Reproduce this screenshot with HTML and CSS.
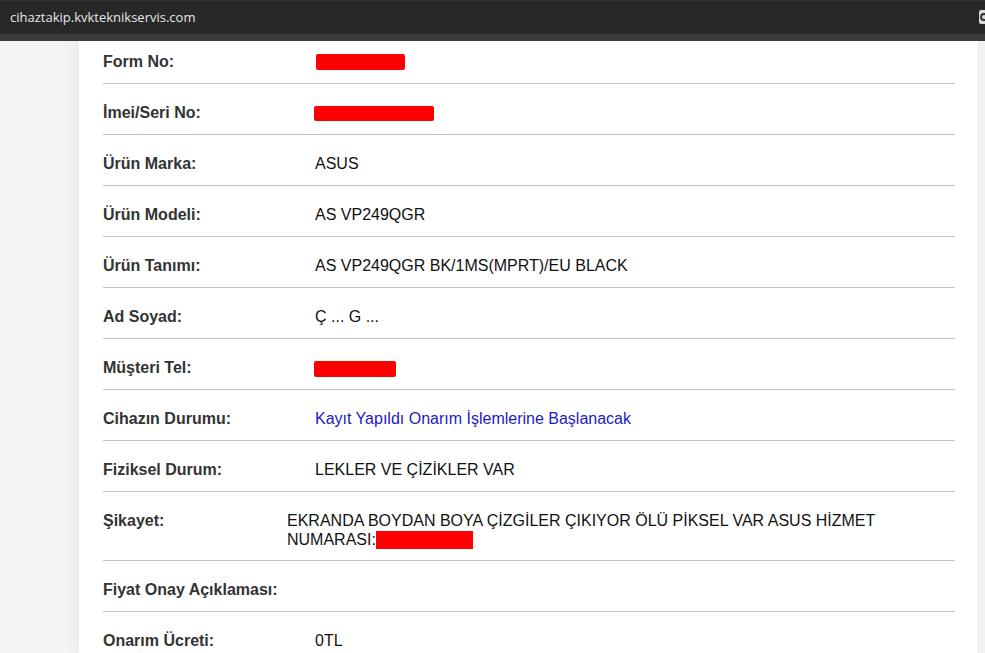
FILE: index.html
```html
<!DOCTYPE html>
<html lang="tr">
<head>
<meta charset="UTF-8" />
<meta name="viewport" content="width=device-width, initial-scale=1" />
<title>Cihaz Takip</title>
<link rel="stylesheet" href="styles.css">
</head>
<body>

<!-- browser bar -->
<div class="topbar">
  <div class="address">cihaztakip.kvkteknikservis.com</div>
  <div class="ext-btn"><span class="ring"></span></div>
</div>
<div class="infobar"></div>

<div class="page">
  <div class="card">
    <div class="row">
      <div class="label">Form No:</div>
      <div class="value"><span class="redact" style="width:89px;margin-left:1px"></span></div>
    </div>
    <div class="row">
      <div class="label">İmei/Seri No:</div>
      <div class="value"><span class="redact redact-low" style="width:120px;margin-left:-1px"></span></div>
    </div>
    <div class="row">
      <div class="label">Ürün Marka:</div>
      <div class="value">ASUS</div>
    </div>
    <div class="row">
      <div class="label">Ürün Modeli:</div>
      <div class="value">AS VP249QGR</div>
    </div>
    <div class="row">
      <div class="label">Ürün Tanımı:</div>
      <div class="value">AS VP249QGR BK/1MS(MPRT)/EU BLACK</div>
    </div>
    <div class="row">
      <div class="label">Ad Soyad:</div>
      <div class="value">Ç ... G ...</div>
    </div>
    <div class="row">
      <div class="label">Müşteri Tel:</div>
      <div class="value"><span class="redact redact-tel" style="width:82px;margin-left:-1px"></span></div>
    </div>
    <div class="row">
      <div class="label">Cihazın Durumu:</div>
      <div class="value status">Kayıt Yapıldı Onarım İşlemlerine Başlanacak</div>
    </div>
    <div class="row">
      <div class="label">Fiziksel Durum:</div>
      <div class="value">LEKLER VE ÇİZİKLER VAR</div>
    </div>
    <div class="row row-wide">
      <div class="label">Şikayet:</div>
      <div class="value">EKRANDA BOYDAN BOYA ÇİZGİLER ÇIKIYOR ÖLÜ PİKSEL VAR ASUS HİZMET <span class="nowrap">NUMARASI:<span class="redact redact-inline" style="width:97px"></span></span></div>
    </div>
    <div class="row">
      <div class="label">Fiyat Onay Açıklaması:</div>
      <div class="value"></div>
    </div>
    <div class="row">
      <div class="label">Onarım Ücreti:</div>
      <div class="value">0TL</div>
    </div>
    <div class="row">
      <div class="label">Teslim Tarihi:</div>
      <div class="value"></div>
    </div>
  </div>
  <div class="scrollbar"></div>
</div>

</body>
</html>
```

FILE: styles.css
```css
* {
  box-sizing: border-box;
}
html, body {
  margin: 0;
  height: 100%;
  overflow: hidden;
}
body {
  background: #f3f3f3;
  font-family: "Liberation Sans", Arial, sans-serif;
}

/* browser bar */
.topbar {
  height: 34px;
  background: #282828;
  border-top: 1px solid #323232;
  display: flex;
  align-items: center;
  justify-content: space-between;
  padding-left: 10px;
}
.address {
  color: #e6e6e6;
  font-family: "Open Sans", "Noto Sans", sans-serif;
  font-size: 13px;
  margin-top: -1px;
}
.ext-btn {
  width: 6px;
  height: 14px;
  background: #d9d9d9;
  border-radius: 2px 0 0 2px;
  overflow: hidden;
  position: relative;
  margin-top: -2px;
}
.ring {
  position: absolute;
  left: 1px;
  top: 3px;
  width: 8px;
  height: 8px;
  border: 2px solid #333;
  border-radius: 50%;
}
.infobar {
  height: 7px;
  background: #3b3b3b;
}

/* page */
.page {
  display: flex;
  height: calc(100% - 41px);
  padding-left: 79px;
  overflow: hidden;
}
.card {
  width: 899px;
  background: #fff;
  padding: 0 23px 0 24px;
  margin-top: -8px;
  box-shadow: 0 0 16px rgba(0, 0, 0, 0.06);
  height: calc(100% + 8px);
  overflow: hidden;
}
.scrollbar {
  width: 7px;
  background: #f1f1f1;
  border-left: 1px solid #e9e9e9;
}

.row {
  display: flex;
  align-items: flex-start;
  padding: 19px 0 12px;
  border-bottom: 1px solid #c4c4c4;
  font-size: 16px;
  line-height: 19px;
}
.label {
  width: 212px;
  flex: none;
  font-weight: bold;
  color: #333;
}
.row-wide {
  padding-bottom: 11px;
}
.row-wide .label {
  width: 184px;
}
.value {
  flex: 1;
  color: #111;
  min-height: 19px;
}
.status {
  color: #1c1cc6;
}
.nowrap {
  white-space: nowrap;
}

/* redacted numbers */
.redact {
  display: inline-block;
  height: 16px;
  background: #ff0000;
  border-radius: 2px;
  vertical-align: -3px;
}
.redact-low {
  height: 15px;
}
.redact-tel {
  vertical-align: -4px;
}
.redact-inline {
  height: 18px;
  border-radius: 0;
  vertical-align: -4px;
}
```
